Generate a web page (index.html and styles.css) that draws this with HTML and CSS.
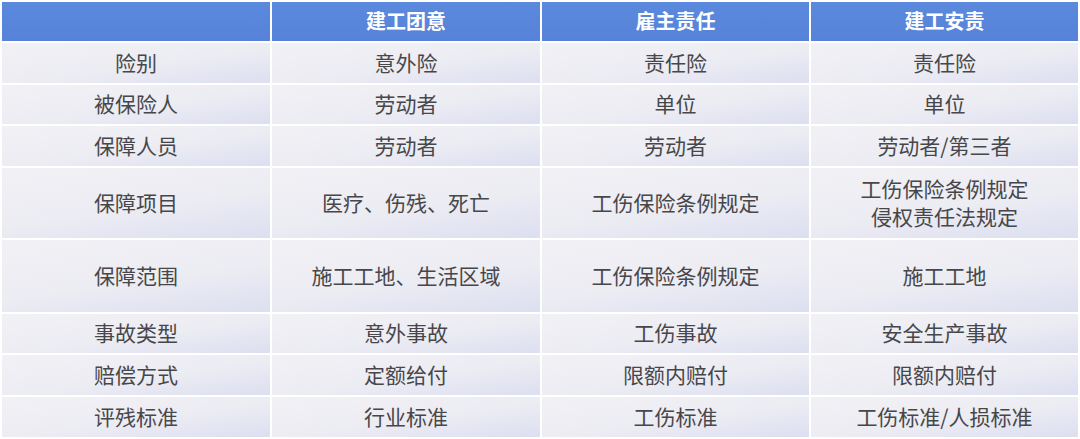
FILE: index.html
```html
<!DOCTYPE html>
<html lang="zh">
<head>
<meta charset="utf-8">
<title>保险对比</title>
<link rel="stylesheet" href="styles.css">
</head>
<body>
<div class="table">
  <div class="cell head"></div>
  <div class="cell head">建工团意</div>
  <div class="cell head">雇主责任</div>
  <div class="cell head">建工安责</div>

  <div class="cell">险别</div>
  <div class="cell">意外险</div>
  <div class="cell">责任险</div>
  <div class="cell">责任险</div>

  <div class="cell">被保险人</div>
  <div class="cell">劳动者</div>
  <div class="cell">单位</div>
  <div class="cell">单位</div>

  <div class="cell">保障人员</div>
  <div class="cell">劳动者</div>
  <div class="cell">劳动者</div>
  <div class="cell">劳动者/第三者</div>

  <div class="cell">保障项目</div>
  <div class="cell">医疗、伤残、死亡</div>
  <div class="cell">工伤保险条例规定</div>
  <div class="cell">工伤保险条例规定<br>侵权责任法规定</div>

  <div class="cell">保障范围</div>
  <div class="cell">施工工地、生活区域</div>
  <div class="cell">工伤保险条例规定</div>
  <div class="cell">施工工地</div>

  <div class="cell">事故类型</div>
  <div class="cell">意外事故</div>
  <div class="cell">工伤事故</div>
  <div class="cell">安全生产事故</div>

  <div class="cell">赔偿方式</div>
  <div class="cell">定额给付</div>
  <div class="cell">限额内赔付</div>
  <div class="cell">限额内赔付</div>

  <div class="cell">评残标准</div>
  <div class="cell">行业标准</div>
  <div class="cell">工伤标准</div>
  <div class="cell">工伤标准/人损标准</div>
</div>
</body>
</html>
```
FILE: styles.css
```css
html, body {
  margin: 0;
  padding: 0;
  background: #ffffff;
}

body {
  width: 1080px;
  height: 439px;
  overflow: hidden;
  font-family: "Noto Sans CJK SC", "Noto Sans", sans-serif;
}

.table {
  display: grid;
  grid-template-columns: 268px 268px 267px 267px;
  grid-template-rows: 39px 40px 39px 40px 70px 72px 39px 40px 40px;
  column-gap: 2px;
  row-gap: 2px;
  padding: 2px 0 0 2px;
}

.cell {
  display: flex;
  align-items: center;
  justify-content: center;
  text-align: center;
  padding-bottom: 3px;
  font-size: 21px;
  line-height: 28px;
  color: #47474b;
  background: linear-gradient(172deg, #f1f1f5 0%, #ececf3 55%, #dcdff0 100%);
}

.head {
  color: #ffffff;
  font-weight: 700;
  font-size: 20px;
  padding-bottom: 2px;
  background: linear-gradient(180deg, #5b89dd 0%, #5683d9 100%);
}
```
